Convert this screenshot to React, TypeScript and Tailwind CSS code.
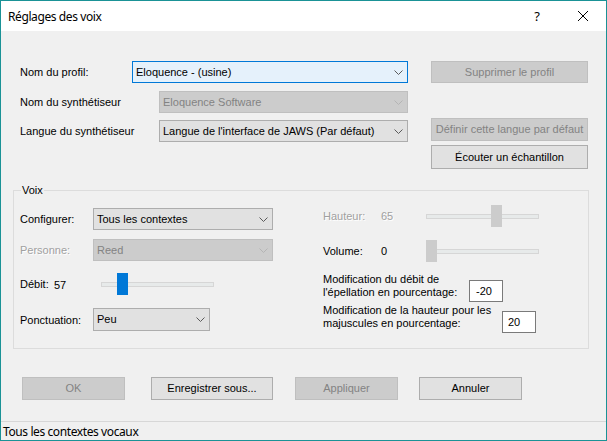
import React from "react";

const Chevron = ({ disabled }: { disabled?: boolean }) => (
  <svg width="9" height="5" viewBox="0 0 9 5" className="shrink-0">
    <polyline
      points="0.5,0.5 4.5,4.5 8.5,0.5"
      fill="none"
      stroke={disabled ? "#b4b4b4" : "#5a5a5a"}
      strokeWidth="1"
    />
  </svg>
);

type ComboProps = {
  text: string;
  variant: "focus" | "normal" | "disabled";
  className: string;
};

const Combo = ({ text, variant, className }: ComboProps) => {
  const v =
    variant === "focus"
      ? "bg-[#e5f1fb] border-[#0078d7] text-black"
      : variant === "disabled"
      ? "bg-[#cccccc] border-[#bfbfbf] text-[#838383]"
      : "bg-[#e1e1e1] border-[#adadad] text-black";
  return (
    <div
      className={`flex items-center justify-between border pl-[3px] pr-[4px] ${v} ${className}`}
    >
      <span className="whitespace-nowrap">{text}</span>
      <Chevron disabled={variant === "disabled"} />
    </div>
  );
};

const Btn = ({
  text,
  disabled,
  className,
}: {
  text: string;
  disabled?: boolean;
  className: string;
}) => (
  <div
    className={`flex items-center justify-center border whitespace-nowrap ${
      disabled
        ? "bg-[#cccccc] border-[#bfbfbf] text-[#838383]"
        : "bg-[#e1e1e1] border-[#adadad] text-black"
    } ${className}`}
  >
    {text}
  </div>
);

const Slider = ({ thumb, thumbClass }: { thumb: string; thumbClass: string }) => (
  <div className="relative w-[113px] h-[22px] flex items-center">
    <div className="w-full h-[5px] border border-[#d6d6d6] bg-[#e7eaea]" />
    <div className={`absolute top-0 w-[11px] h-[22px] ${thumb} ${thumbClass}`} />
  </div>
);

const dis = "text-[#a0a0a0] [text-shadow:1px_1px_0_#ffffff]";

export default function App() {
  return (
    <div className="w-[607px] h-[441px] border border-[#1a9296] flex flex-col overflow-hidden text-[11px] leading-[13px] text-black font-['Liberation_Sans',Arial,sans-serif] bg-[#f0f0f0]">
      {/* Title bar */}
      <div className="h-[30px] bg-white flex items-center shrink-0">
        <span className="pl-[7px] flex-1 text-[12px] tracking-[-0.4px] font-['Noto_Sans',sans-serif]">
          Réglages des voix
        </span>
        <div className="w-[46px] h-[30px] flex items-center justify-center text-[13px] font-['Noto_Sans',sans-serif]">
          ?
        </div>
        <div className="w-[46px] h-[30px] flex items-center justify-center">
          <svg width="10" height="10" viewBox="0 0 10 10">
            <path d="M0 0 L10 10 M10 0 L0 10" stroke="#000" strokeWidth="1" />
          </svg>
        </div>
      </div>

      {/* Body */}
      <div className="flex-1 flex flex-col bg-[#f0f0f0]">
        {/* Top section */}
        <div className="mt-[30px] flex">
          <div className="pl-[19px] flex flex-col">
            <div className="flex items-center h-[22px]">
              <span className="w-[112px]">Nom du profil:</span>
              <Combo text="Eloquence - (usine)" variant="focus" className="w-[276px] h-[22px]" />
            </div>
            <div className="flex items-center h-[22px] mt-[8px]">
              <span className="w-[139px]">Nom du synthétiseur</span>
              <Combo text="Eloquence Software" variant="disabled" className="w-[249px] h-[22px]" />
            </div>
            <div className="flex items-center h-[22px] mt-[7px]">
              <span className="w-[139px]">Langue du synthétiseur</span>
              <Combo
                text="Langue de l'interface de JAWS (Par défaut)"
                variant="normal"
                className="w-[249px] h-[22px]"
              />
            </div>
          </div>
          <div className="ml-[23px] flex flex-col">
            <Btn text="Supprimer le profil" disabled className="w-[157px] h-[22px]" />
            <Btn
              text="Définir cette langue par défaut"
              disabled
              className="w-[157px] h-[23px] mt-[35px]"
            />
            <Btn text="Écouter un échantillon" className="w-[157px] h-[24px] mt-[4px]" />
          </div>
        </div>

        {/* Group box */}
        <div className="mt-[21px] ml-[12px] w-[576px] h-[159px] border border-[#dcdcdc] relative flex">
          <span className="absolute left-[7px] -top-[7px] px-[1px] bg-[#f0f0f0]">Voix</span>

          <div className="w-[309px] pl-[6px] flex flex-col">
            <div className="mt-[17px] flex items-center h-[22px]">
              <span className="w-[73px]">Configurer:</span>
              <Combo text="Tous les contextes" variant="normal" className="w-[180px] h-[22px]" />
            </div>
            <div className="mt-[9px] flex items-center h-[22px]">
              <span className={`w-[73px] ${dis}`}>Personne:</span>
              <Combo text="Reed" variant="disabled" className="w-[180px] h-[22px]" />
            </div>
            <div className="mt-[12px] flex items-center h-[22px]">
              <span className="w-[34px]">Débit:</span>
              <span className="w-[47px] pt-[2px]">57</span>
              <Slider thumb="bg-[#0078d7]" thumbClass="left-[16px]" />
            </div>
            <div className="mt-[13px] flex items-center h-[23px]">
              <span className="w-[73px] pt-[2px]">Ponctuation:</span>
              <Combo text="Peu" variant="normal" className="w-[117px] h-[23px]" />
            </div>
          </div>

          <div className="flex flex-col">
            <div className="mt-[14px] flex items-center h-[22px]">
              <span className={`w-[58px] ${dis}`}>Hauteur:</span>
              <span className={`w-[45px] ${dis}`}>65</span>
              <Slider thumb="bg-[#cccccc]" thumbClass="left-[65px]" />
            </div>
            <div className="mt-[13px] flex items-center h-[22px]">
              <span className="w-[58px]">Volume:</span>
              <span className="w-[45px]">0</span>
              <Slider thumb="bg-[#cccccc]" thumbClass="left-0" />
            </div>
            <div className="mt-[11px] flex items-start">
              <div className="w-[146px]">
                Modification du débit de
                <br />
                l'épellation en pourcentage:
              </div>
              <div className="mt-[7px] w-[34px] h-[22px] bg-white border border-[#7a7a7a] flex items-center pl-[6px]">
                -20
              </div>
            </div>
            <div className="mt-[2px] flex items-start">
              <div className="w-[179px]">
                Modification de la hauteur pour les
                <br />
                majuscules en pourcentage:
              </div>
              <div className="mt-[7px] w-[34px] h-[22px] bg-white border border-[#7a7a7a] flex items-center pl-[5px]">
                20
              </div>
            </div>
          </div>
        </div>

        {/* Bottom buttons */}
        <div className="mt-[28px] ml-[21px] flex">
          <Btn text="OK" disabled className="w-[103px] h-[23px]" />
          <Btn text="Enregistrer sous..." className="w-[122px] h-[23px] ml-[26px]" />
          <Btn text="Appliquer" disabled className="w-[103px] h-[23px] ml-[22px]" />
          <Btn text="Annuler" className="w-[103px] h-[23px] ml-[21px]" />
        </div>
      </div>

      {/* Status bar */}
      <div className="h-[19px] shrink-0 border-t border-[#d7d7d7] flex items-center pl-[2px] text-[12px] tracking-[-0.4px] font-['Noto_Sans',sans-serif]">
        Tous les contextes vocaux
      </div>
    </div>
  );
}
